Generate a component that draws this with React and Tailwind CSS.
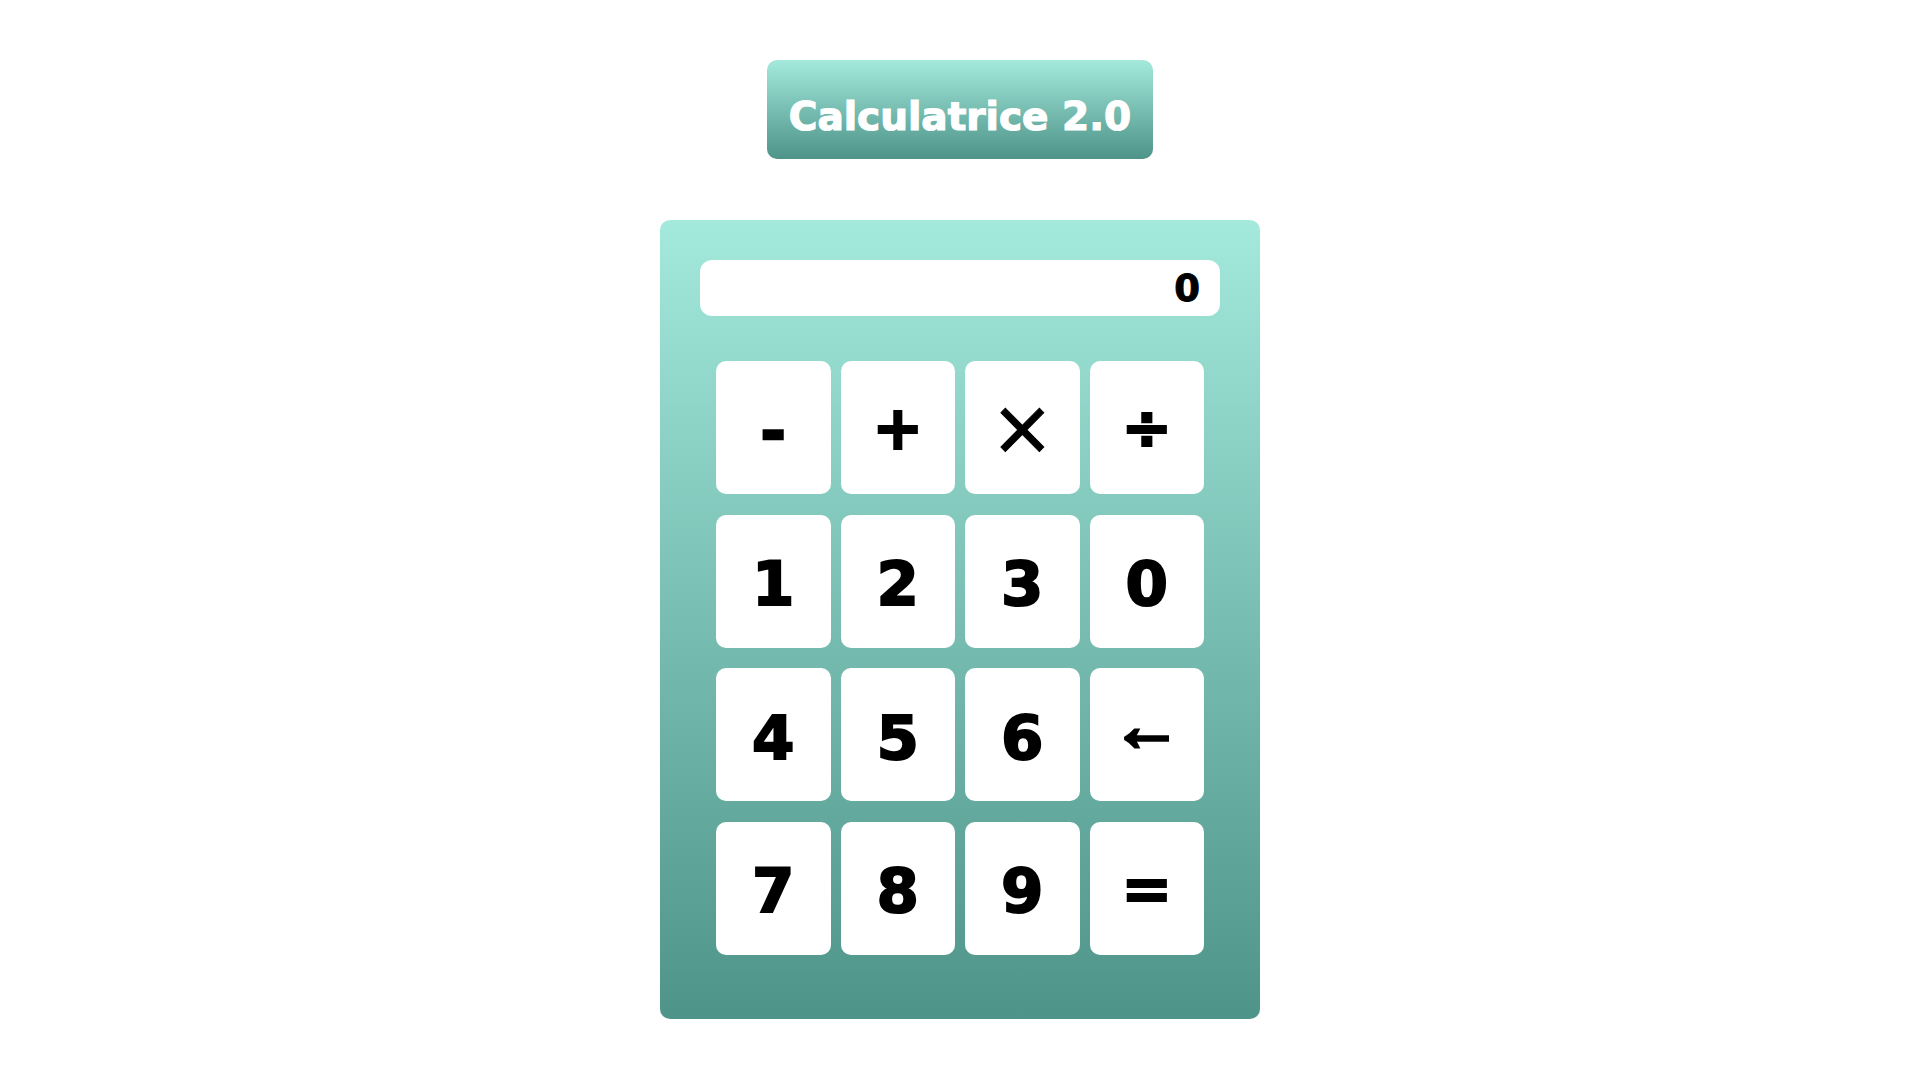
const keys = [
  { label: "-", kind: "minus" },
  { label: "+", kind: "op" },
  { label: "×", kind: "times" },
  { label: "÷", kind: "op" },
  { label: "1" },
  { label: "2" },
  { label: "3" },
  { label: "0" },
  { label: "4" },
  { label: "5" },
  { label: "6" },
  { label: "←", kind: "arrow" },
  { label: "7" },
  { label: "8" },
  { label: "9" },
  { label: "=", kind: "op" },
];

function Key({ label, kind }) {
  // heavy digits: bold face thickened with a stroke
  let text = "pt-[5px] text-[61px] font-bold [-webkit-text-stroke:2px_black]";
  if (kind === "op") text = "text-[61px] font-bold [-webkit-text-stroke:2px_black]";
  if (kind === "minus") text = "pt-[6px] text-[61px] font-bold [-webkit-text-stroke:2.5px_black]";
  if (kind === "times") text = "text-[76px] font-normal [-webkit-text-stroke:1px_black]";
  if (kind === "arrow")
    text = "pb-[18px] font-['Liberation_Sans',sans-serif] text-[70px] font-bold [-webkit-text-stroke:3.5px_black]";

  return (
    <button
      className={`flex h-[133px] items-center justify-center rounded-[10px] bg-white text-black ${text} leading-none`}
    >
      {label}
    </button>
  );
}

export default function App() {
  return (
    <div className="flex min-h-[1079px] flex-col items-center bg-white pl-[9px] pt-[60px] font-['DejaVu_Sans',sans-serif]">
      {/* title */}
      <div className="h-[99px] w-[386px] rounded-[10px] bg-linear-to-b from-[#a3e9dc] to-[#4e9489] pt-[34px] text-center">
        <h1 className="text-[39px] font-bold leading-[46px] text-white [-webkit-text-stroke:1.2px_white]">
          Calculatrice 2.0
        </h1>
      </div>

      {/* calculator body */}
      <div className="mt-[61px] h-[799px] w-[600px] rounded-[10px] bg-linear-to-b from-[#a3e9dc] to-[#4e9489] p-[40px]">
        <div className="flex h-[56px] items-center justify-end rounded-[12px] bg-white pr-[20px] text-[37px] font-bold leading-none text-black [-webkit-text-stroke:1px_black]">
          0
        </div>

        <div className="mx-[16px] mt-[45px] grid grid-cols-4 gap-x-[10px] gap-y-[20.5px]">
          {keys.map((k) => (
            <Key key={k.label} {...k} />
          ))}
        </div>
      </div>
    </div>
  );
}
